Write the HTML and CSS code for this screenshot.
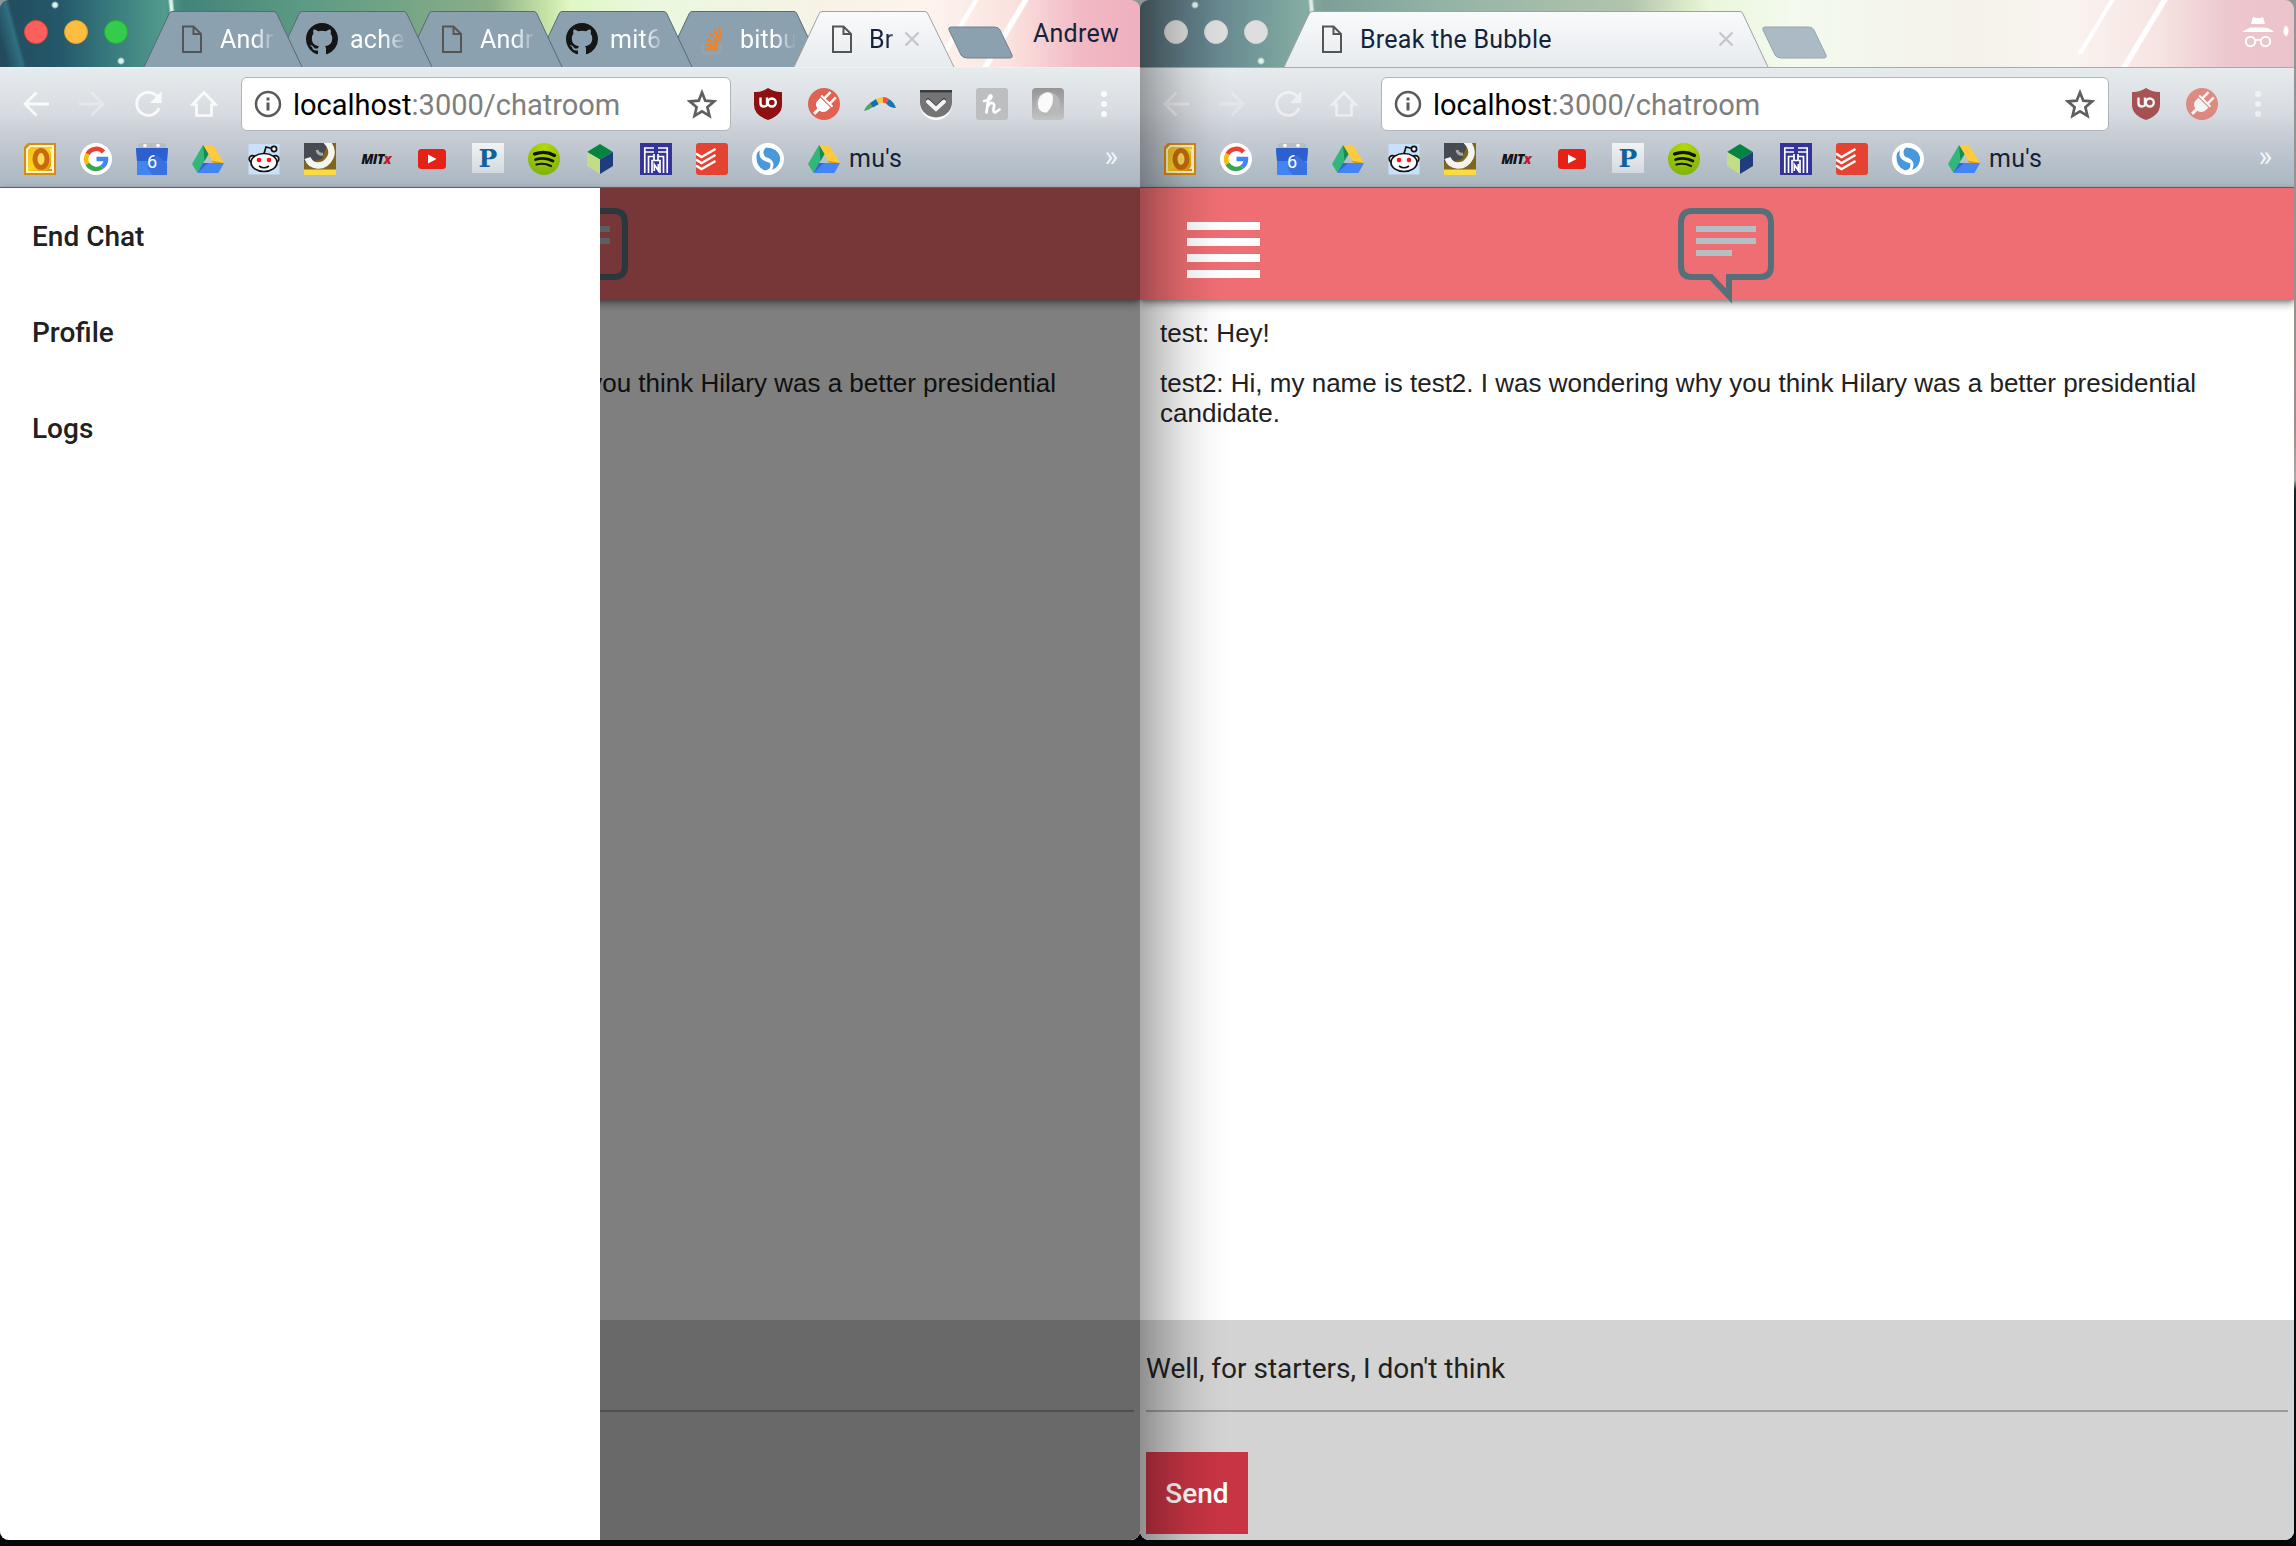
FILE: index.html
```html
<!DOCTYPE html>
<html lang="en">
<head>
<meta charset="utf-8">
<title>Break the Bubble</title>
<link rel="stylesheet" href="styles.css">
</head>
<body>
<svg class="sprite" width="0" height="0" aria-hidden="true">
  <defs>
    <linearGradient id="tabFill" x1="0" y1="0" x2="0" y2="1"><stop offset="0" stop-color="#f9fafc"/><stop offset="1" stop-color="#e7ebee"/></linearGradient>
    <linearGradient id="gold" x1="0" y1="0" x2="1" y2="1"><stop offset="0" stop-color="#f5bd1c"/><stop offset=".5" stop-color="#ffd21c"/><stop offset="1" stop-color="#e08a08"/></linearGradient>
    <linearGradient id="plate" x1="0" y1="0" x2="0" y2="1"><stop offset="0" stop-color="#f1f3f5"/><stop offset="1" stop-color="#d5d9dd"/></linearGradient>
    <linearGradient id="grayPlate" x1="0" y1="0" x2="0" y2="1"><stop offset="0" stop-color="#969696"/><stop offset="1" stop-color="#c2c3c4"/></linearGradient>
    <radialGradient id="lime" cx=".5" cy=".15" r=".8"><stop offset="0" stop-color="#b5d80a"/><stop offset="1" stop-color="#83b509"/></radialGradient>
  </defs>
  <symbol id="page" viewBox="0 0 32 32"><path d="M7 3.500H17.500L25 11V29H7ZM17.500 3.500V11H25" fill="none" stroke="#555" stroke-width="2"/></symbol>
  <symbol id="github" viewBox="0 0 16 16"><path fill="#151515" d="M8 0C3.580 0 0 3.580 0 8c0 3.540 2.290 6.530 5.470 7.590.4.070.55-.17.55-.38 0-.19-.01-.82-.01-1.490-2.010.37-2.530-.49-2.690-.94-.09-.23-.48-.94-.82-1.130-.28-.15-.68-.52-.01-.53.63-.01 1.080.58 1.230.82.720 1.210 1.870.87 2.330.66.070-.52.280-.87.510-1.070-1.780-.2-3.640-.89-3.640-3.950 0-.87.310-1.590.82-2.150-.08-.2-.36-1.020.08-2.120 0 0 .67-.21 2.200.82.640-.18 1.320-.27 2-.27s1.360.09 2 .27c1.530-1.040 2.200-.82 2.200-.82.440 1.100.16 1.920.08 2.120.51.56.82 1.270.82 2.150 0 3.070-1.870 3.750-3.650 3.950.29.250.54.730.54 1.480 0 1.070-.01 1.930-.01 2.200 0 .21.150.46.550.38A8 8 0 0 0 16 8c0-4.420-3.580-8-8-8z"/></symbol>
  <symbol id="stack" viewBox="0 0 32 32"><path d="M6 20v10H24V20" transform="translate(.5)" fill="none" stroke="#9aa3a8" stroke-width="2.500"/><path d="M9 26H21M9.500 21.500l11.500 2M10.500 16l11 5M13.500 10.500l9 8.500M18 6.500l6 11M23 4l2 11" fill="none" stroke="#f48024" stroke-width="2.300"/></symbol>
  <symbol id="close" viewBox="0 0 16 16"><path d="M1.500 1.500l13 13M14.500 1.500l-13 13" stroke="#c5c6c8" stroke-width="2.300"/></symbol>
  <symbol id="newtab" viewBox="0 0 68 33"><path d="M4 1H47.500Q51.500 1 53 4L65 29Q66 32 62.500 32H20Q16 32 14 29L2 4Q1 1 4 1Z"/></symbol>
  <symbol id="back" viewBox="0 0 32 32"><path d="M29 16H5M16.500 4.500L5 16l11.500 11.500" fill="none" stroke="#fff" stroke-width="2.800"/></symbol>
  <symbol id="forward" viewBox="0 0 32 32"><path d="M3 16h24M15.500 4.500L27 16 15.500 27.500" fill="none" stroke="#fff" stroke-width="2.800"/></symbol>
  <symbol id="reload" viewBox="0 0 32 32"><path d="M25.500 9A11.500 11.500 0 1 0 27 20" fill="none" stroke="#fff" stroke-width="2.900"/><path d="M29.500 3v12H18z" fill="#fff"/></symbol>
  <symbol id="home" viewBox="0 0 32 32"><path d="M16 4.500L4.500 16.500H8.500V27.500H23.500V16.500H27.500Z" fill="none" stroke="#fff" stroke-width="2.700"/></symbol>
  <symbol id="info" viewBox="0 0 28 28"><circle cx="14" cy="14" r="12" fill="none" stroke="#5a5a5a" stroke-width="2.500"/><path d="M12.500 7.500h3v3h-3zM12.500 12.500h3v8h-3z" fill="#5a5a5a"/></symbol>
  <symbol id="star" viewBox="0 0 30 30"><path d="M15 3.500l3.300 8.200 8.900.7-6.800 5.800 2.100 8.700L15 22.300l-7.500 4.600 2.100-8.700-6.800-5.800 8.900-.7z" fill="none" stroke="#5f5f5f" stroke-width="2.700"/></symbol>
  <symbol id="ublock" viewBox="0 0 32 32"><path d="M16 0Q9 4.500 2 4V17Q2 27 16 32Q30 27 30 17V4Q23 4.500 16 0Z" fill="#8e1010"/><path d="M8.500 9.500v6q0 3 3.500 3t3-3v-6" fill="none" stroke="#fff" stroke-width="2.400"/><circle cx="19.800" cy="14.500" r="4" fill="none" stroke="#fff" stroke-width="2.400"/></symbol>
  <symbol id="plug" viewBox="0 0 32 32"><circle cx="16" cy="16" r="16" fill="#df6253"/><g transform="rotate(45 16 16)" fill="#fff"><path d="M9 14h14v3q0 6-5.500 7v6h-3v-6Q9 23 9 17z"/><path d="M8 11h16v2H8zM11 3h2.500v8H11zM18.500 3H21v8h-2.500z"/></g></symbol>
  <symbol id="boomerang" viewBox="0 0 32 32"><path d="M0 23Q1 19 6 15l3 4Q4 22.500 0 23" fill="#51a667"/><path d="M6 15l6-4 3 5-6 3.500z" fill="#0e71ad"/><path d="M12 11q4-2 7-2v5.500q-2 0-4.500 1.500z" fill="#fcc44d"/><path d="M19 9q4 0 6 2l-3 4.500-3-1z" fill="#ef5337"/><path d="M25 11q5 3 7 9-6 0-10-4.500z" fill="#1676b4"/></symbol>
  <symbol id="pocket" viewBox="0 0 32 32"><path d="M0 3H32V16A16 16 0 0 1 0 16Z" fill="#fff"/><path d="M0 2H32V14.500A16 15 0 0 1 0 14.500Z" fill="#747474"/><path d="M0 2h32v2.500H0z" fill="#3c3c3c"/><path d="M8 12l8 8 8-8" fill="none" stroke="#444" stroke-width="4" stroke-linecap="round"/><path d="M8 13.500l8 7.500 8-7.500" fill="none" stroke="#f2f4f7" stroke-width="4" stroke-linecap="round"/></symbol>
  <symbol id="honey" viewBox="0 0 32 32"><rect width="32" height="32" rx="3" fill="#bdbebf"/><path d="M8 13Q15 12 15.500 8.500Q14.500 5.500 12.500 10L10.500 24.500M11 19.500Q14 14 17 15.200Q19 16 17.500 21Q17 25.500 20 24L23.500 21.500" fill="none" stroke="#fff" stroke-width="2.700" stroke-linecap="round" stroke-linejoin="round"/></symbol>
  <symbol id="ball" viewBox="0 0 32 32"><rect width="32" height="32" rx="4" fill="url(#grayPlate)"/><circle cx="16" cy="16" r="12" fill="#b8b8b8"/><path d="M11 6Q17 2 20.500 7q2.500 9-5.500 17.500Q6 25.500 6 16 6 9 11 6" fill="#fafafa"/></symbol>
  <symbol id="dots" viewBox="0 0 8 32"><g fill="#fff"><circle cx="4" cy="6" r="3"/><circle cx="4" cy="16" r="3"/><circle cx="4" cy="26" r="3"/></g></symbol>
  <symbol id="incognito" viewBox="0 0 32 32"><path d="M9 8L11 1q5 2 10 0l2 7zM0 16Q8 11 9 11.500H23Q28 12 32 16Z" fill="#fff"/><g fill="none" stroke="#fff" stroke-width="2"><circle cx="8.500" cy="25.500" r="4.700"/><circle cx="23.500" cy="25.500" r="4.700"/><path d="M13 24.500q3-1.500 6 0"/></g></symbol>
  <symbol id="outlook" viewBox="0 0 32 32"><path d="M4 0H32V32H0V4Z" fill="#dc8b0b"/><path d="M6 2H30V30H2V6Z" fill="#fff8d2"/><path d="M7 4H28V28H4V7Z" fill="url(#gold)"/><ellipse cx="17" cy="16" rx="6" ry="8.500" fill="#ffd95a" stroke="#c76b0b" stroke-width="5"/><path d="M25 6h3v20h-3l2-3V9z" fill="#fff2ad"/></symbol>
  <symbol id="google" viewBox="0 0 32 32"><circle cx="16" cy="16" r="16" fill="#fff"/><g fill="none" stroke-width="4.500"><path d="M23.500 9A10 10 0 0 0 7.500 11" stroke="#ea4335"/><path d="M7.500 11A10 10 0 0 0 7.500 21" stroke="#fbbc05"/><path d="M7.500 21A10 10 0 0 0 22 24" stroke="#34a853"/><path d="M16.500 16H26Q26 21 22 24" stroke="#4285f4"/></g></symbol>
  <symbol id="calendar" viewBox="0 0 32 32"><path d="M2 6V2q0-2 3-2h22q3 0 3 2v4z" fill="#b8bdc2"/><circle cx="9" cy="2.500" r="1.800" fill="#fff"/><circle cx="22" cy="2.500" r="1.800" fill="#fff"/><path d="M0 5h32l-1 13v14H1V18z" fill="#4284f1"/><path d="M0 5h32l-1 13H1z" fill="#2e5fd0"/><path d="M21 12l10 9v11H17l-6-7z" fill="#3871e0"/></symbol>
  <symbol id="drive" viewBox="0 0 32 32"><path d="M11 2L0 21 5.500 30 16.500 11z" fill="#33b679"/><path d="M11 2H21L32 20H21.500z" fill="#ffcb3d"/><path d="M11 20H32L26.500 30H5.500z" fill="#4385f5"/><path d="M11 2l5.500 9-4 7z" fill="#188c52"/><path d="M32 20H21.500l-2-2.500z" fill="#d69b20"/><path d="M5.500 30L11 20h5z" fill="#3467cc"/></symbol>
  <symbol id="reddit" viewBox="0 0 32 32"><path d="M.5 1h31v30.500H.5z" fill="#c8e0f8"/><g fill="#fff" stroke="#111" stroke-width="1.700"><circle cx="4.500" cy="16" r="3.300"/><circle cx="27.500" cy="16" r="3.300"/><ellipse cx="16" cy="19.500" rx="13" ry="9"/><path d="M16 10.500l2-6.500 6 1.500" fill="none"/><circle cx="26" cy="6" r="2.600"/><path d="M11 23q5 3.500 10 0" fill="none"/></g><circle cx="11" cy="17" r="2.300" fill="#ff1010"/><circle cx="21" cy="17" r="2.300" fill="#ff1010"/></symbol>
  <symbol id="hook" viewBox="0 0 32 32"><path d="M0 0h32v32H0z" fill="#80651c"/><path d="M0 0h24L18 16 2 20 0 18z" fill="#454b50"/><path d="M0 26.500h32V32H0z" fill="#fbdb43"/><path d="M13 7Q14 12 19 11" fill="none" stroke="#a9a9a4" stroke-width="3"/><path d="M22-2Q30 6 26.500 14Q22 23 13.500 22.500Q6 22 3.500 15" fill="none" stroke="#f5f5ef" stroke-width="6.500"/></symbol>
  <symbol id="youtube" viewBox="0 0 32 32"><rect x="2" y="6" width="28" height="20" rx="3.500" fill="#e62117"/><path d="M12 11.500v9l8.500-4.500z" fill="#fff"/></symbol>
  <symbol id="piazza" viewBox="0 0 32 32"><rect width="32" height="30" rx="1" fill="url(#plate)"/></symbol>
  <symbol id="spotify" viewBox="0 0 32 32"><circle cx="16" cy="16" r="16" fill="url(#lime)"/><g fill="none" stroke="#101600" stroke-linecap="round"><path d="M6.500 11Q17 7 26.500 12.500" stroke-width="3.300"/><path d="M7.500 16.500Q17 13.500 25 18" stroke-width="2.700"/><path d="M8.500 21.500Q16 19.500 23 23" stroke-width="2.200"/></g></symbol>
  <symbol id="cube" viewBox="0 0 32 32"><path d="M16 1l13 8-13 7.500L3 9z" fill="#058441"/><path d="M3 9l13 7.500V31L3 23z" fill="#c3dc87"/><path d="M29 9l-13 7.500V31l13-8z" fill="#213c7c"/></symbol>
  <symbol id="maze" viewBox="0 0 32 32"><path d="M0 0h32v32H0z" fill="#333399"/><g fill="none" stroke="#fff" stroke-width="1.700"><path d="M14 5H4.800V30M4.800 9H14M18 5H27.200V30M27.200 9H18M8.500 30V13.500H14M23.500 30V13.500H18M12 30V17.500H20V30M14 11v6.500M18 11v6.500"/><path d="M14.300 28v-6.500l4 6v-6.500"/></g></symbol>
  <symbol id="todoist" viewBox="0 0 32 32"><rect width="32" height="32" rx="3" fill="#e44332"/><path d="M0 10.500l5.500 3.500L19.500 6M0 16.500L5.500 20 19.500 12M0 22.500L5.500 26l14-8" fill="none" stroke="#fff" stroke-width="2.400"/></symbol>
  <symbol id="simplenote" viewBox="0 0 32 32"><circle cx="16" cy="16" r="16" fill="#fff"/><path d="M14 4.500Q9 9 13.500 14Q25 17 20 27Q29 23 28 14Q26 5 14 4.500M4.500 13Q4 24 13 27.500Q20 26 18 20Q5 17 8 7Q5 9 4.500 13" fill="#4a98dc"/></symbol>
  <symbol id="bubble" viewBox="0 0 96 98"><path d="M14 3H82Q93 3 93 15V58Q93 69 82 69H51V88L33 69H14Q3 69 3 58V15Q3 3 14 3Z" fill="none" stroke="#586f79" stroke-width="6"/><path d="M18 18h60v6H18zM18 30h60v6H18zM18 42h36v6H18z" fill="#b3bfc5"/></symbol>
</svg>

<div class="desktop">
  <section class="window window-left">
    <header class="tabstrip">
      <div class="lights"><i class="light red"></i><i class="light amber"></i><i class="light green"></i></div>
      <div class="tabs">
        <div class="tab t1"><svg class="tab-shape" width="158" height="56"><path d="M0 56L25 3Q26 .500 28 .500H130Q132 .500 133 3L158 56"/></svg><svg class="tab-icon"><use href="#page"/></svg><span class="tab-title">Andr</span></div>
        <div class="tab t2"><svg class="tab-shape" width="158" height="56"><path d="M0 56L25 3Q26 .500 28 .500H130Q132 .500 133 3L158 56"/></svg><svg class="tab-icon"><use href="#github"/></svg><span class="tab-title">ache</span></div>
        <div class="tab t3"><svg class="tab-shape" width="158" height="56"><path d="M0 56L25 3Q26 .500 28 .500H130Q132 .500 133 3L158 56"/></svg><svg class="tab-icon"><use href="#page"/></svg><span class="tab-title">Andr</span></div>
        <div class="tab t4"><svg class="tab-shape" width="158" height="56"><path d="M0 56L25 3Q26 .500 28 .500H130Q132 .500 133 3L158 56"/></svg><svg class="tab-icon"><use href="#github"/></svg><span class="tab-title">mit6</span></div>
        <div class="tab t5"><svg class="tab-shape" width="158" height="56"><path d="M0 56L25 3Q26 .500 28 .500H130Q132 .500 133 3L158 56"/></svg><svg class="tab-icon"><use href="#stack"/></svg><span class="tab-title">bitbu</span></div>
        <div class="tab active"><svg class="tab-shape" width="160" height="56"><path d="M0 56L25 3Q26 .500 28 .500H131Q133 .500 134 3L160 56"/></svg><svg class="tab-icon"><use href="#page"/></svg><span class="tab-title narrow">Br</span><svg class="tab-close"><use href="#close"/></svg></div>
      </div>
      <svg class="newtab"><use href="#newtab"/></svg>
      <span class="user">Andrew</span>
    </header>
    <div class="chrome">
      <div class="toolbar">
        <svg class="ic nav"><use href="#back"/></svg><svg class="ic nav faint"><use href="#forward"/></svg><svg class="ic nav"><use href="#reload"/></svg><svg class="ic nav"><use href="#home"/></svg>
        <div class="omnibox"><svg class="info"><use href="#info"/></svg><span class="url"><b>localhost</b>:3000/chatroom</span><svg class="star"><use href="#star"/></svg></div>
        <div class="extensions">
          <svg class="ic"><use href="#ublock"/></svg><svg class="ic"><use href="#plug"/></svg><svg class="ic"><use href="#boomerang"/></svg><svg class="ic"><use href="#pocket"/></svg><svg class="ic"><use href="#honey"/></svg><svg class="ic"><use href="#ball"/></svg>
        </div>
        <svg class="dots"><use href="#dots"/></svg>
      </div>
      <nav class="bookmarks">
        <svg class="ic"><use href="#outlook"/></svg><svg class="ic"><use href="#google"/></svg><span class="glyph calendar"><svg class="ic"><use href="#calendar"/></svg><b>6</b></span><svg class="ic"><use href="#drive"/></svg><svg class="ic"><use href="#reddit"/></svg><svg class="ic"><use href="#hook"/></svg><span class="glyph mitx">MIT<em>x</em></span><svg class="ic"><use href="#youtube"/></svg><span class="glyph piazza"><svg class="ic"><use href="#piazza"/></svg><b>P</b></span><svg class="ic"><use href="#spotify"/></svg><svg class="ic"><use href="#cube"/></svg><svg class="ic"><use href="#maze"/></svg><svg class="ic"><use href="#todoist"/></svg><svg class="ic"><use href="#simplenote"/></svg>
        <span class="folder"><svg class="ic"><use href="#drive"/></svg>mu's</span>
        <span class="more">»</span>
      </nav>
    </div>
    <main class="app">
      <header class="appbar"><svg class="logo"><use href="#bubble"/></svg></header>
      <div class="messages"><p class="message tail">you think Hilary was a better presidential</p></div>
      <form class="composer"><div class="field"></div></form>
      <div class="scrim"></div>
      <aside class="drawer"><a>End Chat</a><a>Profile</a><a>Logs</a></aside>
    </main>
  </section>

  <section class="window window-right">
    <header class="tabstrip">
      <div class="lights"><i class="light"></i><i class="light"></i><i class="light"></i></div>
      <div class="tabs">
        <div class="tab active wide"><svg class="tab-shape" width="484" height="56"><path d="M0 56L25 3Q26 .500 28 .500H456Q458 .500 459 3L484 56"/></svg><svg class="tab-icon"><use href="#page"/></svg><span class="tab-title">Break the Bubble</span><svg class="tab-close"><use href="#close"/></svg></div>
      </div>
      <svg class="newtab"><use href="#newtab"/></svg>
      <svg class="incognito"><use href="#incognito"/></svg>
    </header>
    <div class="chrome">
      <div class="toolbar">
        <svg class="ic nav"><use href="#back"/></svg><svg class="ic nav faint"><use href="#forward"/></svg><svg class="ic nav"><use href="#reload"/></svg><svg class="ic nav"><use href="#home"/></svg>
        <div class="omnibox"><svg class="info"><use href="#info"/></svg><span class="url"><b>localhost</b>:3000/chatroom</span><svg class="star"><use href="#star"/></svg></div>
        <div class="extensions"><svg class="ic"><use href="#ublock"/></svg><svg class="ic"><use href="#plug"/></svg></div>
        <svg class="dots"><use href="#dots"/></svg>
      </div>
      <nav class="bookmarks">
        <svg class="ic"><use href="#outlook"/></svg><svg class="ic"><use href="#google"/></svg><span class="glyph calendar"><svg class="ic"><use href="#calendar"/></svg><b>6</b></span><svg class="ic"><use href="#drive"/></svg><svg class="ic"><use href="#reddit"/></svg><svg class="ic"><use href="#hook"/></svg><span class="glyph mitx">MIT<em>x</em></span><svg class="ic"><use href="#youtube"/></svg><span class="glyph piazza"><svg class="ic"><use href="#piazza"/></svg><b>P</b></span><svg class="ic"><use href="#spotify"/></svg><svg class="ic"><use href="#cube"/></svg><svg class="ic"><use href="#maze"/></svg><svg class="ic"><use href="#todoist"/></svg><svg class="ic"><use href="#simplenote"/></svg>
        <span class="folder"><svg class="ic"><use href="#drive"/></svg>mu's</span>
        <span class="more">»</span>
      </nav>
    </div>
    <main class="app">
      <header class="appbar"><div class="menu"><i></i><i></i><i></i><i></i></div><svg class="logo"><use href="#bubble"/></svg></header>
      <div class="messages">
        <p class="message">test: Hey!</p>
        <p class="message">test2: Hi, my name is test2. I was wondering why you think Hilary was a better presidential<br>candidate.</p>
      </div>
      <form class="composer"><div class="field">Well, for starters, I don't think</div><button class="send" type="button">Send</button></form>
    </main>
    <div class="cast"></div>
  </section>
</div>
</body>
</html>
```
FILE: styles.css
```css
* { box-sizing: border-box; }
body { margin: 0; font-family: Roboto, sans-serif; }
.sprite { position: absolute; }
svg { display: block; flex: none; }
i { display: block; }

.desktop {
  display: flex;
  width: 2296px;
  height: 1546px;
  overflow: hidden;
  background: linear-gradient(#8f9698 0, #9b8f8a 430px, #aaa 480px, #16232b 490px, #03080b);
}
.window {
  position: relative;
  display: flex;
  flex-direction: column;
  height: 1540px;
  border-radius: 9px;
  overflow: hidden;
}
.window-left { width: 1140px; }
.window-right { width: 1154px; }

/* Title bar */
.tabstrip {
  display: flex;
  align-items: flex-start;
  height: 67px;
  flex: none;
  background:
    radial-gradient(circle at 55px 5px, #d8f3ec 2px, transparent 4px),
    radial-gradient(circle at 121px 61px, #d8f3ec 2px, transparent 4px),
    linear-gradient(85deg, transparent 173px, #d4f2e4 175px, #d4f2e4 177px, transparent 179px),
    linear-gradient(121deg, transparent 46%, #fff 48% 52%, transparent 54%) 931px 0 / 50px 67px no-repeat,
    linear-gradient(121deg, transparent 46%, #fff 48% 53%, transparent 55%) 980px 0 / 50px 67px no-repeat,
    linear-gradient(75deg, transparent 8px, #2f7080 22px, transparent 26px),
    linear-gradient(90deg, #234b5d 0, #24586a 60px, #3c8080 120px, #529b8d 165px, #438479 185px, #5b9a84 300px, #8bae88 490px, #c5e2a6 545px, #dff8c4 570px, #eaf8df 650px, #f6f3e6 820px, #fdf4ef 930px, #fbe3df 1010px, #f2b9c4 1080px, #efb0be 1140px);
}
.window-right .tabstrip {
  background:
    radial-gradient(circle at 55px 5px, #e0f0ec 2px, transparent 4px),
    radial-gradient(circle at 121px 61px, #e0f0ec 2px, transparent 4px),
    radial-gradient(ellipse 3px 6px at 1146px 31px, #fff 60%, transparent),
    linear-gradient(85deg, transparent 173px, #dcebe4 175px, #dcebe4 177px, transparent 179px),
    linear-gradient(121deg, transparent 46%, #fff 48% 52%, transparent 54%) 931px 0 / 50px 54px no-repeat,
    linear-gradient(121deg, transparent 46%, #fff 48% 53%, transparent 55%) 979px 0 / 50px 67px no-repeat,
    linear-gradient(90deg, #587078 0, #62808a 60px, #749a99 120px, #86ada4 165px, #7d9f98 185px, #93b3a6 300px, #b2c4ad 490px, #d9e9c8 545px, #eaf7db 570px, #f3faee 650px, #f5f2ea 820px, #faf4f0 930px, #f6e4e2 1020px, #ecc7cd 1090px, #ecc3cb 1154px);
}
.lights { display: flex; gap: 16px; padding: 20px 0 0 24px; width: 144px; flex: none; }
.light { width: 24px; height: 24px; border-radius: 50%; background: #dedede; border: 1px solid #d2d2d2; }
.red { background: #fd5f5c; border-color: #e2453f; }
.amber { background: #fdbd41; border-color: #e0a02c; }
.green { background: #35cb4b; border-color: #25ad37; }
.tabs { display: flex; padding-top: 11px; }
.tab { position: relative; display: flex; align-items: center; isolation: isolate; width: 158px; height: 56px; margin-right: -28px; padding-left: 32px; color: #fff; }
.tab-shape { position: absolute; left: 0; top: 0; z-index: -1; fill: #8ba1b0; stroke: #566b74; stroke-width: 1; overflow: visible; }
.t1 { z-index: 5; }
.t2 { z-index: 4; }
.t3 { z-index: 3; }
.t4 { z-index: 2; }
.t5 { z-index: 1; }
.tab.active { z-index: 6; width: 160px; margin-right: 0; color: #15233a; }
.active .tab-shape { fill: url(#tabFill); stroke: #9da2a3; }
.tab.wide { width: 484px; }
.tab-icon { width: 32px; height: 32px; }
.tab-title {
  width: 56px;
  margin-left: 12px;
  padding-top: 1px;
  white-space: nowrap;
  font-size: 25px;
  letter-spacing: .25px;
  line-height: 32px;
  -webkit-mask-image: linear-gradient(90deg, #000 60%, transparent);
}
.tab-title.narrow { width: 26px; margin-left: 11px; -webkit-mask-image: linear-gradient(90deg, #000 70%, #0008); }
.wide .tab-title { width: 341px; -webkit-mask-image: none; }
.tab-close { width: 16px; height: 16px; margin-left: 9px; }
.wide .tab-close { margin-left: 17px; }
.newtab { width: 68px; height: 33px; margin: 26px 0 0 -7px; fill: #8ba1b0; stroke: #6f828c; stroke-width: 1; }
.window-right .newtab { fill: #abbac5; stroke: #98a6ad; }
.user { margin: 19px 0 0 18px; font-size: 25px; letter-spacing: .25px; line-height: 30px; color: #15233a; }
.incognito { width: 32px; height: 32px; margin: 16px 20px 0 auto; }

/* Toolbar and bookmarks */
.chrome { flex: none; height: 121px; border-top: 1px solid #edf1f3; border-bottom: 1px solid #636e78; background: linear-gradient(#e6ebed, #d9dde3 35%, #c6ccd4 58%, #aab6c0); }
.window-right .chrome { border-top-color: #a8abac; }
.toolbar { display: flex; align-items: center; height: 72px; padding: 0 32px 0 20px; }
.ic { width: 32px; height: 32px; }
.nav { margin-right: 24px; opacity: .85; }
.faint { opacity: .3; }
.window-right .nav { opacity: .5; }
.window-right .faint { opacity: .25; }
.omnibox { display: flex; align-items: center; flex: 1; height: 54px; margin: 0 21px 0 -3px; padding: 0 13px 0 12px; background: #fff; border: 1px solid #b2b5b8; border-radius: 6px; }
.info { width: 28px; height: 28px; margin-right: 11px; }
.url { flex: 1; padding-top: 1px; font-size: 29px; color: #7e7e7e; white-space: nowrap; }
.url b { font-weight: 400; color: #000; }
.star { width: 30px; height: 30px; }
.extensions { display: flex; gap: 24px; margin-right: 36px; }
.window-right .extensions { opacity: .68; }
.dots { width: 8px; height: 32px; opacity: .85; }
.window-right .dots { opacity: .55; }
.bookmarks { display: flex; align-items: center; gap: 24px; height: 38px; padding: 0 22px 0 24px; }
.glyph { display: grid; flex: none; width: 32px; height: 32px; place-items: center; }
.glyph > .ic, .glyph > b { grid-area: 1 / 1; }
.calendar b { padding-top: 5px; font-size: 18px; font-weight: 400; line-height: 22px; color: #fff; }
.piazza b { font: 700 25px/28px "DejaVu Serif", serif; color: #11629c; }
.mitx { display: flex; align-items: center; justify-content: center; font: italic 800 13.500px/20px "Open Sans", sans-serif; letter-spacing: -.6px; color: #141414; }
.mitx em { color: #b8202f; }
.folder { display: flex; align-items: center; gap: 9px; font-size: 25px; line-height: 32px; letter-spacing: .3px; color: #15233a; }
.more { margin-left: auto; font-size: 29px; line-height: 28px; padding-bottom: 6px; color: #f3f6f8; }

/* Chat application */
.app { position: relative; display: flex; flex-direction: column; flex: 1; background: #fff; color: #212121; }
.appbar { position: relative; display: flex; justify-content: center; height: 112px; flex: none; background: #ef6e73; box-shadow: 0 4px 8px rgba(0,0,0,.35), 0 1px 4px rgba(0,0,0,.3); }
.logo { width: 96px; height: 98px; margin: 20px 0 0 20px; }
.menu { position: absolute; left: 47px; top: 34px; display: grid; gap: 8px; }
.window-right .logo { margin-left: 17px; }
.menu i { width: 73px; height: 8px; background: #fff; }
.messages { flex: 1; padding: 18px 20px; }
.message { margin: 0 0 20px; font: 26px/30px "Liberation Sans", Arial, sans-serif; white-space: nowrap; }
.tail { padding: 50px 64px 0 0; text-align: right; }
.composer { height: 220px; padding: 18px 6px 0; background: #d3d3d3; }
.field { height: 74px; margin-bottom: 40px; border-bottom: 2px solid #9c9c9c; font-size: 28px; line-height: 62px; }
.send { display: block; width: 102px; height: 82px; border: 0; padding: 0; background: #c93444; color: #fff; font: 500 28px Roboto, sans-serif; }
.scrim { position: absolute; inset: 0; background: rgba(0,0,0,.5); }
.drawer { position: absolute; left: 0; top: 0; bottom: 0; width: 600px; padding-top: 1px; background: #fff; }
.drawer a { display: block; height: 96px; padding-left: 32px; font-size: 28px; font-weight: 500; line-height: 96px; }

/* Shadow that the front window casts on the one behind it */
.cast { position: absolute; left: 0; top: 0; bottom: 0; width: 90px; background: linear-gradient(90deg, rgba(0,0,0,.32), rgba(0,0,0,.22) 20%, rgba(0,0,0,.09) 50%, rgba(0,0,0,.02) 80%, transparent); pointer-events: none; }
```
